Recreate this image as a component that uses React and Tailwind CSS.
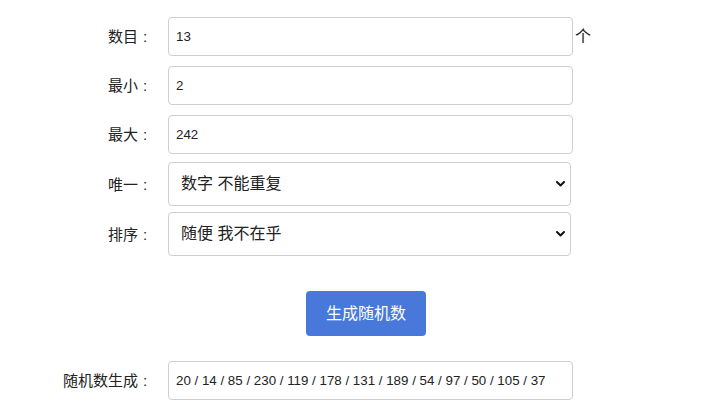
import React from "react";

function Label({ children }) {
  return (
    <div className="flex w-[153px] shrink-0 justify-end text-[15px] text-[#222] leading-none">
      <span>{children}</span>
      <span className="inline-block w-[15px] pl-[5px] text-left">:</span>
    </div>
  );
}

function Chevron() {
  return (
    <svg
      className="pointer-events-none absolute right-[6px] top-1/2 -translate-y-1/2"
      width="9"
      height="6"
      viewBox="0 0 9 6"
      fill="none"
    >
      <path d="M1 1 L4.5 4.5 L8 1" stroke="#111" strokeWidth="2" strokeLinecap="round" strokeLinejoin="round" />
    </svg>
  );
}

function SelectRow({ label, value, options, className }) {
  return (
    <div className={"flex items-center " + className}>
      <Label>{label}</Label>
      <div className="relative ml-[15px] w-[403px]">
        <select
          defaultValue={value}
          className="h-[44px] w-full appearance-none rounded-[4px] border border-[#cfcfcf] bg-white pl-[12px] text-[16px] text-[#222] outline-none font-['Liberation_Sans','Noto_Sans_CJK_SC',sans-serif]"
        >
          {options.map((o) => (
            <option key={o} value={o}>
              {o}
            </option>
          ))}
        </select>
        <Chevron />
      </div>
    </div>
  );
}

function InputRow({ label, value, suffix, className }) {
  return (
    <div className={"flex items-center " + className}>
      <Label>{label}</Label>
      <div className="ml-[15px] flex h-[39px] w-[405px] items-center rounded-[4px] border border-[#cfcfcf] bg-white px-[7px] text-[13.333px] text-[#222]">
        {value}
      </div>
      {suffix && <span className="ml-[2px] text-[16px] leading-none text-[#222]">{suffix}</span>}
    </div>
  );
}

export default function App() {
  return (
    <div className="h-[417px] w-[710px] bg-white pt-[17px] font-['Liberation_Sans','Noto_Sans_CJK_SC',sans-serif]">
      <InputRow label="数目" value="13" suffix="个" />
      <InputRow label="最小" value="2" className="mt-[10px]" />
      <InputRow label="最大" value="242" className="mt-[10px]" />
      <SelectRow
        label="唯一"
        value="数字 不能重复"
        options={["数字 不能重复", "数字 可以重复"]}
        className="mt-[8px]"
      />
      <SelectRow
        label="排序"
        value="随便 我不在乎"
        options={["随便 我不在乎", "从小到大", "从大到小"]}
        className="mt-[6px]"
      />
      <div className="ml-[306px] mt-[35px] flex h-[45px] w-[120px] items-center justify-center rounded-[4px] bg-[#4879da] text-[16px] text-white">
        生成随机数
      </div>
      <InputRow
        label="随机数生成"
        value="20 / 14 / 85 / 230 / 119 / 178 / 131 / 189 / 54 / 97 / 50 / 105 / 37"
        className="mt-[25px]"
      />
    </div>
  );
}
